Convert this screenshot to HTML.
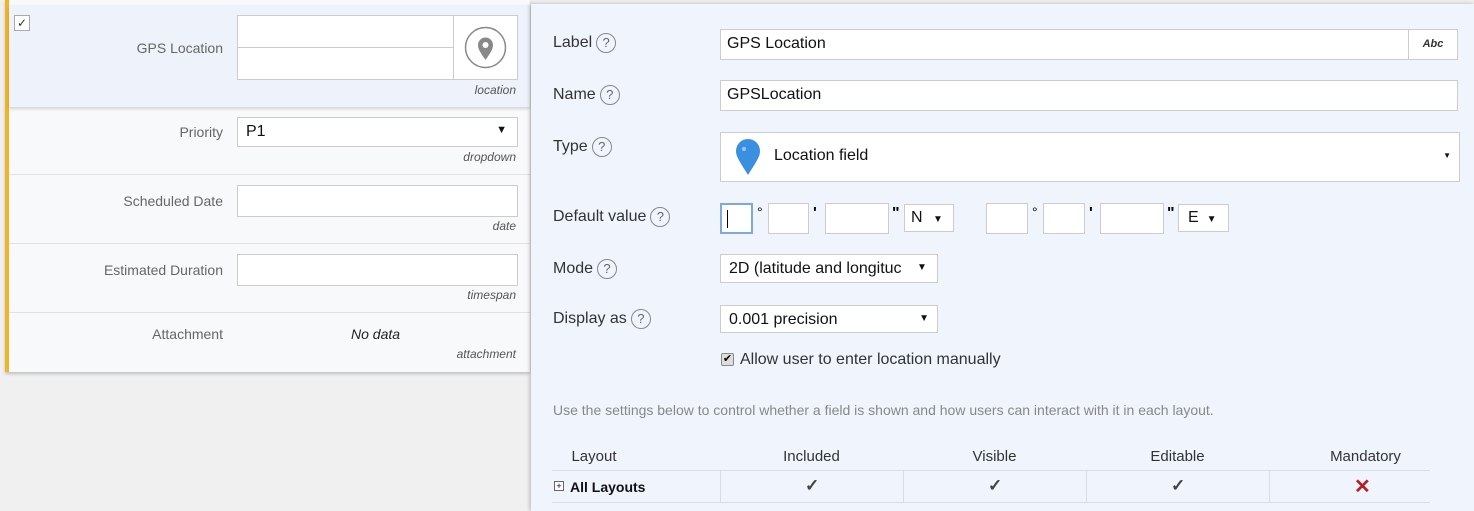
<!DOCTYPE html>
<html><head><style>
*{box-sizing:border-box;margin:0;padding:0}
body{width:1474px;height:511px;background:#f0f0f0;font-family:"Liberation Sans",sans-serif;position:relative;overflow:hidden}
.a{position:absolute}
.lp{left:5px;top:0;width:525px;height:372px;background:#f8f9fb;border-left:4px solid #f0b429;box-shadow:0 2px 3px rgba(0,0,0,.2)}
.lbl{font-size:14px;color:#666;text-align:right;width:200px;left:23px}
.in{background:#fff;border:1px solid #ccc}
.ty{font-size:12px;font-style:italic;color:#555;text-align:right;width:200px;left:316px}
.sep{left:9px;width:521px;height:1px;background:#e2e2e2}
.rp{left:531px;top:4px;width:943px;height:507px;background:#f0f4fc;box-shadow:-1px 0 4px rgba(0,0,0,.25)}
.rl{font-size:16px;color:#333;left:553px}
.q{display:inline-block;width:20px;height:20px;border:1px solid #888;border-radius:50%;font-size:13px;text-align:center;line-height:18px;color:#666;margin-left:4px;vertical-align:middle}
.rt{font-size:16px;color:#111;white-space:nowrap}
.th{font-size:15px;color:#333;text-align:center;top:448px}
.ck{font-size:17px;color:#444;font-weight:bold}
</style></head><body>
<div class="a lp"></div>
<div class="a" style="left:9px;top:5px;width:521px;height:102px;background:#eef2fb;box-shadow:0 2px 3px rgba(0,0,0,.15)"></div>
<div class="a" style="left:14px;top:15px;width:16px;height:16px;border:1px solid #aaa;background:#fff;font-size:12px;text-align:center;line-height:14px;color:#333">✓</div>
<div class="a lbl" style="top:40px">GPS Location</div>
<div class="a in" style="left:237px;top:15px;width:281px;height:65px"></div>
<div class="a" style="left:237px;top:47px;width:216px;height:1px;background:#ccc"></div>
<div class="a" style="left:453px;top:15px;width:1px;height:65px;background:#ccc"></div>
<svg class="a" style="left:464px;top:26px" width="43" height="43" viewBox="0 0 43 43"><circle cx="21.5" cy="21.5" r="20" fill="none" stroke="#888" stroke-width="1.5"/><path d="M21.5 34 C16 26 14 23 14 19 A7.5 7.5 0 0 1 29 19 C29 23 27 26 21.5 34Z" fill="#888"/><circle cx="21.5" cy="19" r="3" fill="#fff"/></svg>
<div class="a ty" style="top:83px">location</div>
<div class="a lbl" style="top:124px">Priority</div>
<div class="a in" style="left:237px;top:117px;width:281px;height:30px;font-size:16px;padding:5px 8px;color:#111">P1<span style="position:absolute;right:10px;top:6px;font-size:11px">▼</span></div>
<div class="a ty" style="top:150px">dropdown</div>
<div class="a sep" style="top:174px"></div>
<div class="a lbl" style="top:193px">Scheduled Date</div>
<div class="a in" style="left:237px;top:185px;width:281px;height:32px"></div>
<div class="a ty" style="top:219px">date</div>
<div class="a sep" style="top:243px"></div>
<div class="a lbl" style="top:262px">Estimated Duration</div>
<div class="a in" style="left:237px;top:254px;width:281px;height:32px"></div>
<div class="a ty" style="top:288px">timespan</div>
<div class="a sep" style="top:312px"></div>
<div class="a lbl" style="top:326px">Attachment</div>
<div class="a" style="left:351px;top:326px;font-size:14px;font-style:italic;color:#222">No data</div>
<div class="a ty" style="top:347px">attachment</div>

<div class="a rp"></div>
<div class="a rl" style="top:33px">Label<span class="q">?</span></div>
<div class="a in rt" style="left:720px;top:29px;width:738px;height:31px;padding:5px 6px">GPS Location</div>
<div class="a" style="left:1408px;top:29px;width:50px;height:31px;border:1px solid #ccc;background:#fff;font-size:11px;font-style:italic;font-weight:bold;text-align:center;line-height:29px;color:#333">Abc</div>
<div class="a rl" style="top:85px">Name<span class="q">?</span></div>
<div class="a in rt" style="left:720px;top:80px;width:738px;height:31px;padding:5px 6px">GPSLocation</div>
<div class="a rl" style="top:137px">Type<span class="q">?</span></div>
<div class="a in rt" style="left:720px;top:132px;width:740px;height:50px;padding:14px 0 0 53px">Location field<span style="position:absolute;right:8px;top:18px;font-size:8px">▼</span></div>
<svg class="a" style="left:735px;top:138px" width="26" height="38" viewBox="0 0 26 38"><path d="M13 37 C5 24 1 19 1 13 A12 12 0 0 1 25 13 C25 19 21 24 13 37Z" fill="#3b8fe0"/><circle cx="9" cy="11" r="2" fill="#9cc8f2"/></svg>
<div class="a rl" style="top:207px">Default value<span class="q">?</span></div>
<div class="a in" style="left:720px;top:203px;width:33px;height:31px;border:2px solid #7fa8e0"><div style="width:1px;height:18px;background:#000;margin:5px 0 0 5px"></div></div>
<div class="a" style="left:757px;top:204px;font-size:14px">°</div>
<div class="a in" style="left:768px;top:203px;width:41px;height:31px"></div>
<div class="a" style="left:813px;top:205px;font-size:16px;font-weight:bold">'</div>
<div class="a in" style="left:825px;top:203px;width:64px;height:31px"></div>
<div class="a" style="left:892px;top:205px;font-size:16px;font-weight:bold">"</div>
<div class="a in rt" style="left:904px;top:204px;width:50px;height:28px;padding:4px 6px">N <span style="font-size:10px;margin-left:6px">▼</span></div>
<div class="a in" style="left:986px;top:203px;width:42px;height:31px"></div>
<div class="a" style="left:1032px;top:204px;font-size:14px">°</div>
<div class="a in" style="left:1043px;top:203px;width:42px;height:31px"></div>
<div class="a" style="left:1089px;top:205px;font-size:16px;font-weight:bold">'</div>
<div class="a in" style="left:1100px;top:203px;width:64px;height:31px"></div>
<div class="a" style="left:1167px;top:205px;font-size:16px;font-weight:bold">"</div>
<div class="a in rt" style="left:1178px;top:204px;width:51px;height:28px;padding:4px 9px">E<span style="font-size:10px;margin-left:8px">▼</span></div>
<div class="a rl" style="top:259px">Mode<span class="q">?</span></div>
<div class="a in rt" style="left:720px;top:254px;width:218px;height:29px;padding:5px 8px;overflow:hidden">2D (latitude and longituc<span style="position:absolute;right:0;top:0;width:20px;height:27px;font-size:10px;background:#fff;padding-top:7px">▼</span></div>
<div class="a rl" style="top:309px">Display as<span class="q">?</span></div>
<div class="a in rt" style="left:720px;top:305px;width:218px;height:28px;padding:5px 8px">0.001 precision<span style="position:absolute;right:8px;top:7px;font-size:10px">▼</span></div>
<div class="a" style="left:721px;top:353px;width:13px;height:13px;border:1px solid #888;background:#ddd;font-size:11px;line-height:11px;text-align:center;border-radius:2px">✔</div>
<div class="a" style="left:740px;top:351px;font-size:16px;color:#333">Allow user to enter location manually</div>
<div class="a" style="left:553px;top:402px;font-size:14px;color:#888">Use the settings below to control whether a field is shown and how users can interact with it in each layout.</div>
<div class="a th" style="left:552px;width:84px">Layout</div>
<div class="a th" style="left:720px;width:183px">Included</div>
<div class="a th" style="left:903px;width:183px">Visible</div>
<div class="a th" style="left:1086px;width:183px">Editable</div>
<div class="a th" style="left:1269px;width:193px">Mandatory</div>
<div class="a" style="left:552px;top:470px;width:878px;height:1px;background:#d8dce4"></div>
<div class="a" style="left:552px;top:502px;width:878px;height:1px;background:#d8dce4"></div>
<div class="a" style="left:720px;top:471px;width:1px;height:31px;background:#d8dce4"></div>
<div class="a" style="left:903px;top:471px;width:1px;height:31px;background:#d8dce4"></div>
<div class="a" style="left:1086px;top:471px;width:1px;height:31px;background:#d8dce4"></div>
<div class="a" style="left:1269px;top:471px;width:1px;height:31px;background:#d8dce4"></div>
<div class="a" style="left:554px;top:481px;width:10px;height:10px;border:1px solid #666;font-size:9px;line-height:8px;text-align:center;background:#fff">+</div>
<div class="a" style="left:570px;top:479px;font-size:14px;font-weight:bold;color:#111">All Layouts</div>
<div class="a ck" style="left:805px;top:476px">✓</div>
<div class="a ck" style="left:988px;top:476px">✓</div>
<div class="a ck" style="left:1171px;top:476px">✓</div>
<div class="a" style="left:1354px;top:474px;font-size:20px;font-weight:bold;color:#b22222">✕</div>
</body></html>
